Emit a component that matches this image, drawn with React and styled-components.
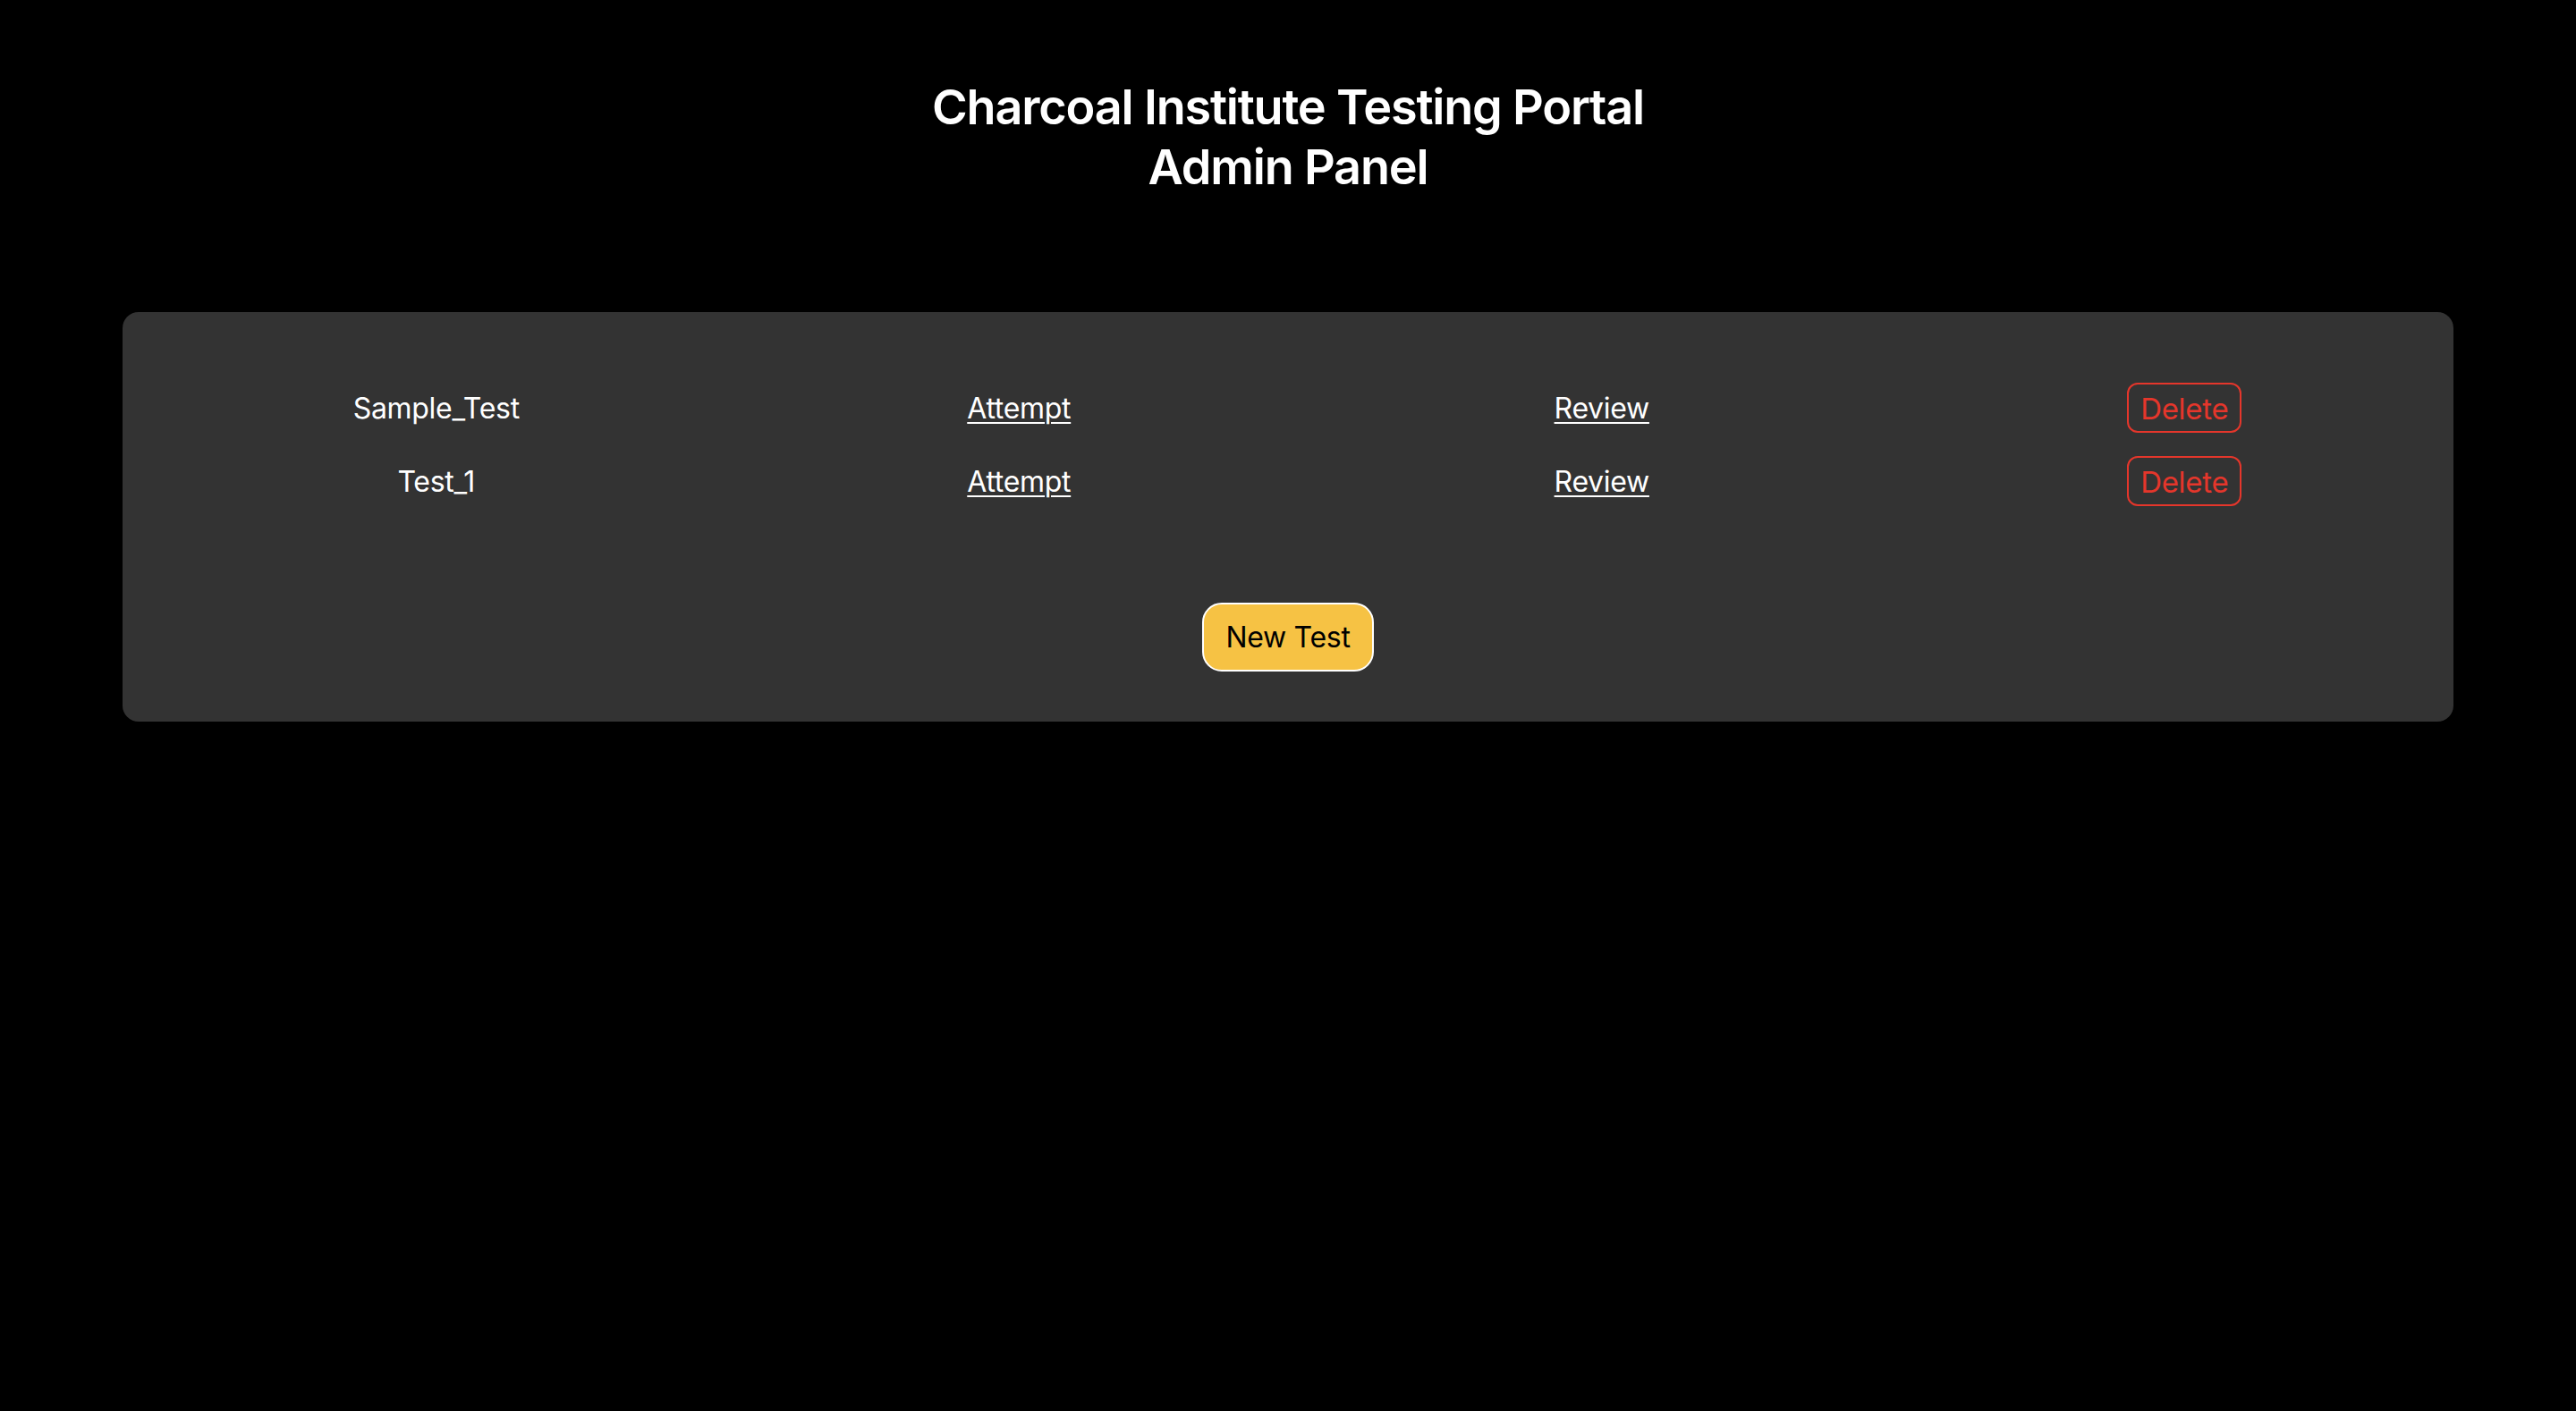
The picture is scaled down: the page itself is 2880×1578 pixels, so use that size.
import React from 'react';
import styled, { createGlobalStyle } from 'styled-components';

const GlobalStyle = createGlobalStyle`
  html, body {
    margin: 0;
    padding: 0;
    background-color: #000000;
  }
  body {
    font-family: Inter, "Noto Sans", "Liberation Sans", sans-serif;
    color: #ffffff;
  }
`;

const Page = styled.div`
  min-height: 1578px;
  padding: 86px 137px 0;
  box-sizing: border-box;
`;

const Title = styled.h1`
  margin: 0 0 129px;
  text-align: center;
  font-size: 54px;
  line-height: 67px;
  font-weight: 600;
  letter-spacing: -1.2px;
  color: #ffffff;
`;

const Panel = styled.div`
  background-color: #333333;
  border-radius: 18px;
  padding: 66px 0 56px;
  display: flex;
  flex-direction: column;
  align-items: center;
`;

const TestList = styled.div`
  align-self: stretch;
  margin: 0 -25px 95px 25px;
  display: flex;
  flex-direction: column;
`;

const Row = styled.div`
  display: grid;
  grid-template-columns: repeat(4, 1fr);
  align-items: center;
  justify-items: center;
  height: 82px;
`;

const TestName = styled.span`
  font-size: 32px;
  letter-spacing: -0.3px;
  color: #ffffff;
`;

const TestLink = styled.a`
  font-size: 32px;
  letter-spacing: -0.3px;
  color: #ffffff;
  text-decoration: underline;
  text-underline-offset: 4px;
  text-decoration-thickness: 2px;
  cursor: pointer;
`;

const DeleteButton = styled.button`
  font-family: inherit;
  font-size: 33px;
  letter-spacing: -0.3px;
  color: #e5362b;
  background: transparent;
  border: 2px solid #e5362b;
  border-radius: 12px;
  padding: 7px 13px 5px;
  line-height: 40px;
  cursor: pointer;
`;

const NewTestButton = styled.button`
  font-family: inherit;
  font-size: 32px;
  letter-spacing: -0.3px;
  color: #000000;
  background-color: #f6c244;
  border: 2px solid #ffffff;
  border-radius: 22px;
  padding: 17px 24px;
  line-height: 39px;
  cursor: pointer;
`;

const tests = ['Sample_Test', 'Test_1'];

const App = () => {
  return (
    <>
      <GlobalStyle />
      <Page>
        <Title>
          Charcoal Institute Testing Portal
          <br />
          Admin Panel
        </Title>
        <Panel>
          <TestList>
            {tests.map((name) => (
              <Row key={name}>
                <TestName>{name}</TestName>
                <TestLink>Attempt</TestLink>
                <TestLink>Review</TestLink>
                <DeleteButton>Delete</DeleteButton>
              </Row>
            ))}
          </TestList>
          <NewTestButton>New Test</NewTestButton>
        </Panel>
      </Page>
    </>
  );
};

export default App;
